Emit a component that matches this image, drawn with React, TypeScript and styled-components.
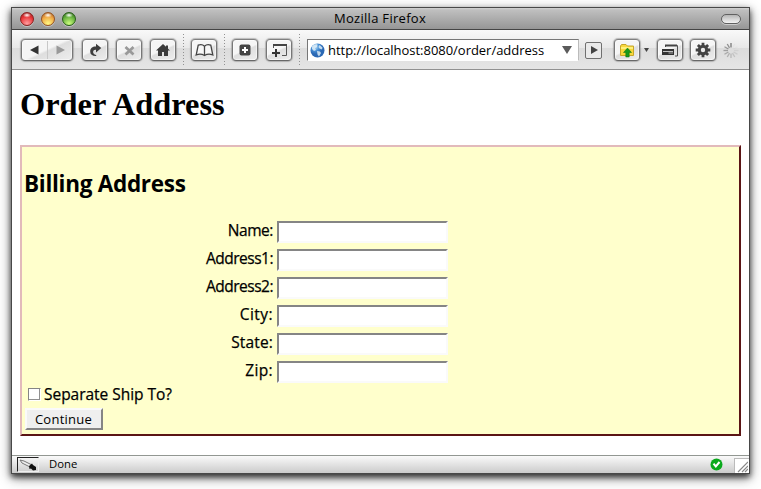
import React from 'react';
import styled, { createGlobalStyle } from 'styled-components';

const GlobalStyle = createGlobalStyle`
  * { box-sizing: border-box; }
  html, body { margin: 0; background: #fff; overflow: hidden; }
  svg { display: block; flex: none; }
`;

const ui = `"Open Sans", "Noto Sans", sans-serif`;

const Desktop = styled.div`
  width: 761px;
  height: 489px;
  padding: 7px 11px 15px;
  overflow: hidden;
`;

const Window = styled.div`
  width: 739px;
  height: 467px;
  display: flex;
  flex-direction: column;
  border: 1px solid #484848;
  background: #fff;
  box-shadow: 0 3px 6px rgba(0, 0, 0, 0.72), 0 4px 12px rgba(0, 0, 0, 0.42);
`;

const TitleBar = styled.header`
  height: 22px;
  flex: none;
  display: grid;
  grid-template-columns: 80px 1fr 80px;
  align-items: center;
  border-bottom: 1px solid #444;
  background: linear-gradient(#d2d2d2 0, #bfbfbf 2px, #969696 100%);
`;

const Lights = styled.div`
  display: flex;
  gap: 7px;
  padding-left: 8px;
`;

const Light = styled.span<{ $dark: string; $mid: string; $glow: string }>`
  width: 14px;
  height: 14px;
  border-radius: 50%;
  border: 1px solid ${p => p.$dark};
  background:
    radial-gradient(ellipse 4px 2.5px at 50% 18%, #fff, rgba(255, 255, 255, 0) 100%),
    radial-gradient(circle at 50% 88%, ${p => p.$glow} 5%, ${p => p.$mid} 60%, ${p => p.$dark} 100%);
  box-shadow: 0 1px 0 rgba(255, 255, 255, 0.4);
`;

const Title = styled.div`
  text-align: center;
  font: 13px/20px ${ui};
  letter-spacing: 0.3px;
  padding: 0 1px 1px 0;
  color: #000;
  white-space: nowrap;
`;

const Pill = styled.span`
  justify-self: end;
  width: 20px;
  height: 10px;
  margin-right: 8px;
  border: 1px solid #606060;
  border-radius: 5px;
  background: linear-gradient(#b5b5b5, #f4f4f4);
  box-shadow: 0 1px 0 #ccc;
`;

const Toolbar = styled.nav`
  height: 40px;
  flex: none;
  display: flex;
  align-items: center;
  padding: 1px 0 0 9px;
  border-bottom: 1px solid #919191;
  background: linear-gradient(#f9f9f9 0, #e8e8e8 18px, #dcdcdc 18px, #e5e5e5 39px);
`;

const ToolButton = styled.button<{ $w?: number; $ml?: number }>`
  width: ${p => p.$w ?? 26}px;
  height: 22px;
  margin: 0 0 0 ${p => p.$ml ?? 8}px;
  padding: 0;
  flex: none;
  display: flex;
  align-items: center;
  justify-content: center;
  border: 1.5px solid #777;
  border-color: #808080 #777 #686868;
  border-radius: 4px;
  background: linear-gradient(155deg, #f5f5f5 0 48%, #dedede 54%, #eee 100%);
  box-shadow: 0 0 1px 1px rgba(130, 130, 130, 0.5), inset 0 0 0 1px rgba(255, 255, 255, 0.5);
`;

const Divider = styled.span`
  width: 1px;
  height: 32px;
  flex: none;
  margin-left: 7px;
  background: repeating-linear-gradient(#929292 0 1px, transparent 1px 3px);
`;

const AddressBar = styled.div`
  width: 272px;
  height: 22px;
  margin-left: 7px;
  padding: 0 6px 0 2px;
  flex: none;
  display: flex;
  align-items: center;
  background: #fff;
  border-top: 1px solid #777;
  border-left: 1px solid #777;
  border-right: 1px solid #bbb;
  border-bottom: 1px solid #fff;
`;

const Url = styled.span`
  flex: 1;
  margin-left: 3px;
  font: 13px/20px ${ui};
  letter-spacing: -0.03px;
  color: #000;
  white-space: nowrap;
`;

const GoButton = styled.button`
  width: 17px;
  height: 17px;
  margin: 0 4px 0 6px;
  padding: 0;
  flex: none;
  display: grid;
  place-items: center;
  border: 1px solid #707070;
  border-radius: 2px;
  background: #eaeaea;
`;

const Caret = styled.span`
  margin: 0 0 1px 4px;
`;

const Spinner = styled.span`
  margin-left: 7px;
`;

const Page = styled.main`
  flex: 1;
  padding: 14px 8px 0;
`;

const Heading = styled.h1`
  margin: 0;
  height: 61px;
  font: bold 32.4px/40px "Liberation Serif", serif;
  letter-spacing: -0.02px;
  color: #000;
  white-space: nowrap;
`;

const Panel = styled.form`
  height: 291px;
  padding: 20px 3px 0 2px;
  border: 2px solid;
  border-color: #e2babb #5b1515 #5b1515 #e2babb;
  background: #ffc;
  color: #000;
`;

const SubHeading = styled.h2`
  margin: 0 0 18px;
  height: 36px;
  font: bold 22.5px/34px ${ui};
  letter-spacing: -0.28px;
  white-space: nowrap;
`;

const Fields = styled.div`
  display: grid;
  grid-auto-rows: 22px;
  row-gap: 6px;
`;

const Field = styled.label<{ $tracking: number }>`
  display: grid;
  grid-template-columns: 249px 171px;
  column-gap: 4px;
  font: 15.5px/19px ${ui};
  letter-spacing: ${p => p.$tracking}px;
  -webkit-text-stroke: 0.25px #000;
  text-align: right;
`;

const Input = styled.input`
  width: 171px;
  height: 22px;
  margin: 0;
  padding: 1px 2px;
  border: 2px solid;
  border-color: #858585 #fafafa #fafafa #858585;
  border-radius: 0;
  background: #fff;
  outline: none;
`;

const CheckRow = styled.label`
  height: 24px;
  display: flex;
  align-items: center;
  padding: 0 0 2px 4px;
  font: 15.5px/22px ${ui};
  letter-spacing: -0.03px;
  -webkit-text-stroke: 0.25px #000;
  white-space: nowrap;
`;

const Checkbox = styled.input`
  appearance: none;
  width: 13px;
  height: 13px;
  margin: 0 3px 0 0;
  border: 1px solid;
  border-color: #858585 #fff #fff #858585;
  background: #fff;
  box-shadow: inset -1px -1px 0 #909090;
`;

const Submit = styled.button`
  display: block;
  width: 78px;
  height: 22px;
  margin: 1px 0 0 1px;
  padding: 0 1px 0 0;
  border: 2px solid;
  border-color: #fafafa #858585 #858585 #fafafa;
  background: #efefef;
  color: #000;
  font: 13px/18px ${ui};
  letter-spacing: 0.25px;
`;

const StatusBar = styled.footer`
  height: 18px;
  flex: none;
  display: flex;
  align-items: center;
  padding-left: 5px;
  border-top: 1px solid #929792;
  background: linear-gradient(#fafafa, #cbcbcb);
`;

const Well = styled.span`
  width: 22px;
  height: 15px;
  display: grid;
  place-items: center;
  border: 1px solid;
  border-color: #222 #eee #eee #222;
`;

const Status = styled.span`
  flex: 1;
  padding: 0 0 1px 10px;
  font: 11.3px/16px ${ui};
  color: #000;
`;

const Grip = styled.span`
  align-self: flex-end;
  width: 15px;
  height: 15px;
  margin-left: 11px;
  border-top: 1px solid #bbb;
  border-left: 1px solid #bbb;
  background: #fff;
`;

const fields = [
  { name: 'Name:', tracking: -0.45 },
  { name: 'Address1:', tracking: -0.5 },
  { name: 'Address2:', tracking: -0.5 },
  { name: 'City:', tracking: 0.45 },
  { name: 'State:', tracking: 0.15 },
  { name: 'Zip:', tracking: 0.35 },
];

const BackForward = () => (
  <svg width="49" height="18" viewBox="0 0 49 18">
    <path d="M24.5 0v18" stroke="#c8c8c8" />
    <path d="M15.5 4.5v9L7 9z" fill="#333" />
    <path d="M33.5 4.5v9L42 9z" fill="#999" />
  </svg>
);

const Reload = () => (
  <svg width="15" height="14" viewBox="0 0 15 14">
    <path d="M8 .8l5.3 4.2L8 9.5V6.8C6 6.6 4.8 8 5.2 9.7c.3 1.3 1.6 2 3 2.3v1C4.5 13.2 2.2 11.5 2.2 8.5 2.2 5.2 4.7 3.4 8 3.6z" fill="#3d3d3d" />
  </svg>
);

const Stop = () => (
  <svg width="11" height="11" viewBox="0 0 11 11">
    <path d="M1.5 2L9.5 9.5M9.5 2L1.5 9.5" stroke="#999" strokeWidth="2.7" />
  </svg>
);

const Home = () => (
  <svg width="14" height="13" viewBox="0 0 14 13">
    <path d="M7 0l3 2.8V1.5h2v3.2L14 6.5h-2V12H8V8H6v4H2V6.5H0z" fill="#3b3b3b" />
  </svg>
);

const Book = () => (
  <svg width="19" height="14" viewBox="0 0 19 14">
    <path d="M9.5 3.2C7.8 1.5 5.5 1.2 3.2 2.2L1.2 12c2.8-1.2 5.8-1 8.3.5 2.5-1.5 5.5-1.7 8.3-.5l-2-9.8c-2.3-1-4.6-.7-6.3 1zV12" fill="#f7f7f7" stroke="#444" strokeWidth="1.3" />
  </svg>
);

const NewTab = () => (
  <svg width="12" height="12" viewBox="0 0 12 12">
    <rect x=".5" y=".5" width="11" height="11" rx="2" fill="#444" />
    <path d="M6 3v6M3 6h6" stroke="#fff" strokeWidth="2" />
  </svg>
);

const NewWindow = () => (
  <svg width="17" height="15" viewBox="0 0 17 15">
    <path d="M2.5 5V2.5h13v10H11" fill="none" stroke="#555" />
    <path d="M2 2h14" stroke="#444" strokeWidth="2" />
    <path d="M5 6v8M1 10h8" stroke="#333" strokeWidth="2" />
  </svg>
);

const Globe = () => (
  <svg width="15" height="15" viewBox="0 0 15 15">
    <defs>
      <radialGradient id="sea" cx=".35" cy=".25">
        <stop stopColor="#b5dcf7" />
        <stop offset=".55" stopColor="#478fd5" />
        <stop offset="1" stopColor="#2a68b4" />
      </radialGradient>
    </defs>
    <circle cx="7.5" cy="7.5" r="7" fill="url(#sea)" />
    <path d="M2 3.5C4 1 6 .8 7.5 1.5L7 4 5 5l1 2-2 1-2-2zM9.5 2l3 2.5-.5 2-2.5-1-1-1.5zM7 8l3 .5 1 1.5-2 3.5-1.5-2z" fill="#ddecf6" opacity=".85" />
  </svg>
);

const Folder = () => (
  <svg width="16" height="15" viewBox="0 0 16 15">
    <path d="M1.5 12.5V3l1-1.5H7L8.5 3h6v9.5z" fill="#f8d83c" stroke="#c5a52a" />
    <path d="M2 4h12v2H2z" fill="#fff07a" />
    <path d="M8.5 5l4 4.5h-2.3V14H6.8V9.5H4.5z" fill="#16991c" stroke="#08710f" strokeWidth=".5" />
  </svg>
);

const Windows = () => (
  <svg width="18" height="13" viewBox="0 0 18 13">
    <path d="M4.5 3V1.5h12V12H14" fill="none" stroke="#505050" />
    <path d="M4 1.5h12" stroke="#444" strokeWidth="2" />
    <rect x="1" y="5" width="12" height="6" fill="#333" />
    <path d="M2 7.5h10" stroke="#fff" strokeWidth=".7" />
    <path d="M7.5 9h4.5" stroke="#aaa" />
  </svg>
);

const Gear = () => (
  <svg width="16" height="16" viewBox="0 0 16 16">
    <path d="M8 .7v14.6M.7 8h14.6M2.9 2.9l10.2 10.2M13.1 2.9L2.9 13.1" stroke="#424242" strokeWidth="2.8" />
    <circle cx="8" cy="8" r="3.7" fill="#e8e8e8" stroke="#424242" strokeWidth="3" />
  </svg>
);

const Throbber = () => (
  <svg width="16" height="17" viewBox="0 0 16 17">
    {Array.from({ length: 12 }, (_, i) => (
      <path key={i} d="M8 1v4.5" transform={`rotate(${i * 30} 8 8.5)`} stroke="#777" strokeWidth="1.3" opacity={i === 0 ? 1 : Math.max(0.05, i * 0.085 - 0.15)} />
    ))}
  </svg>
);

export default function App() {
  return (
    <>
      <GlobalStyle />
      <Desktop>
        <Window>
          <TitleBar>
            <Lights>
              <Light $dark="#89201f" $mid="#e63235" $glow="#ff9698" />
              <Light $dark="#965321" $mid="#eda342" $glow="#fff37e" />
              <Light $dark="#285e18" $mid="#63ae3d" $glow="#c5f779" />
            </Lights>
            <Title>Mozilla Firefox</Title>
            <Pill />
          </TitleBar>
          <Toolbar>
            <ToolButton $w={52} $ml={0} type="button" aria-label="Back and forward"><BackForward /></ToolButton>
            <ToolButton $ml={9} type="button" aria-label="Reload"><Reload /></ToolButton>
            <ToolButton type="button" aria-label="Stop"><Stop /></ToolButton>
            <ToolButton type="button" aria-label="Home"><Home /></ToolButton>
            <Divider />
            <ToolButton $ml={7} type="button" aria-label="Bookmarks"><Book /></ToolButton>
            <Divider />
            <ToolButton $ml={7} type="button" aria-label="New tab"><NewTab /></ToolButton>
            <ToolButton type="button" aria-label="New window"><NewWindow /></ToolButton>
            <Divider />
            <AddressBar>
              <Globe />
              <Url>http://localhost:8080/order/address</Url>
              <svg width="10" height="8" viewBox="0 0 10 8"><path d="M0 0h10L5 8z" fill="#5b5b5b" /></svg>
            </AddressBar>
            <GoButton type="button" aria-label="Go">
              <svg width="8" height="8" viewBox="0 0 8 8"><path d="M1 0v8l7-4z" fill="#444" /></svg>
            </GoButton>
            <ToolButton type="button" aria-label="Upload"><Folder /></ToolButton>
            <Caret><svg width="5" height="4" viewBox="0 0 5 4"><path d="M0 0h5L2.5 4z" fill="#444" /></svg></Caret>
            <ToolButton type="button" aria-label="Windows"><Windows /></ToolButton>
            <ToolButton $ml={7} type="button" aria-label="Settings"><Gear /></ToolButton>
            <Spinner><Throbber /></Spinner>
          </Toolbar>
          <Page>
            <Heading>Order Address</Heading>
            <Panel>
              <SubHeading>Billing Address</SubHeading>
              <Fields>
                {fields.map(f => (
                  <Field key={f.name} $tracking={f.tracking}>{f.name}<Input type="text" /></Field>
                ))}
              </Fields>
              <CheckRow><Checkbox type="checkbox" />Separate Ship To?</CheckRow>
              <Submit type="button">Continue</Submit>
            </Panel>
          </Page>
          <StatusBar>
            <Well>
              <svg width="20" height="12" viewBox="0 0 20 12">
                <path d="M2 1l2 3 8 4 2-2-8-4z" fill="#eee" stroke="#777" />
                <path d="M11 7l3-2.5 1 1.5 3 2v3l-3 .5-2-2-1.5.5z" fill="#111" />
              </svg>
            </Well>
            <Status>Done</Status>
            <svg width="13" height="13" viewBox="0 0 13 13">
              <circle cx="6.5" cy="6.5" r="6" fill="#0aa91c" />
              <path d="M3.5 5.7l2.3 2.8L9.5 4" fill="none" stroke="#fff" strokeWidth="2" />
            </svg>
            <Grip>
              <svg width="13" height="14" viewBox="0 0 13 14"><path d="M3 13L13 3M7 13l6-6M10 13l3-3" stroke="#888" strokeWidth="1.2" /></svg>
            </Grip>
          </StatusBar>
        </Window>
      </Desktop>
    </>
  );
}
